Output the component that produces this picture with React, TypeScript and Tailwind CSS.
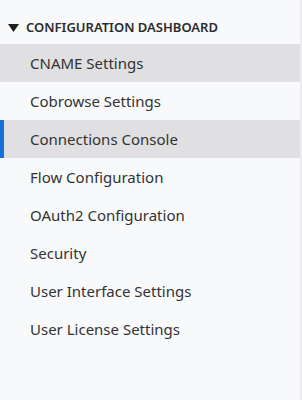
const items = [
  "CNAME Settings",
  "Cobrowse Settings",
  "Connections Console",
  "Flow Configuration",
  "OAuth2 Configuration",
  "Security",
  "User Interface Settings",
  "User License Settings",
];

export default function App() {
  return (
    <div className="flex h-[400px] w-[302px] bg-[#f8f9fb] font-['Noto_Sans',sans-serif]">
      <nav className="w-[300px] pt-[17px]">
        <div className="flex h-[21px] items-center gap-[7px] pl-[8px] text-[13px] font-semibold uppercase text-[#2b2b2b]">
          <svg width="11" height="8" viewBox="0 0 11 8" className="fill-[#1f1f1f]">
            <path d="M0 0h11L5.5 8z" />
          </svg>
          Configuration Dashboard
        </div>
        <ul className="mt-[6px]">
          {items.map((label, i) => {
            const hover = i === 0;
            const active = i === 2;
            return (
              <li
                key={label}
                className={
                  "relative flex h-[38px] items-center pl-[30px] text-[15px] text-[#333] " +
                  (hover || active ? "bg-[#e0e0e2]" : "")
                }
              >
                {active && <span className="absolute inset-y-0 left-0 w-[4px] bg-[#1a6fd6]" />}
                {label}
              </li>
            );
          })}
        </ul>
      </nav>
      <div className="w-[2px] bg-[#ececee]" />
    </div>
  );
}
